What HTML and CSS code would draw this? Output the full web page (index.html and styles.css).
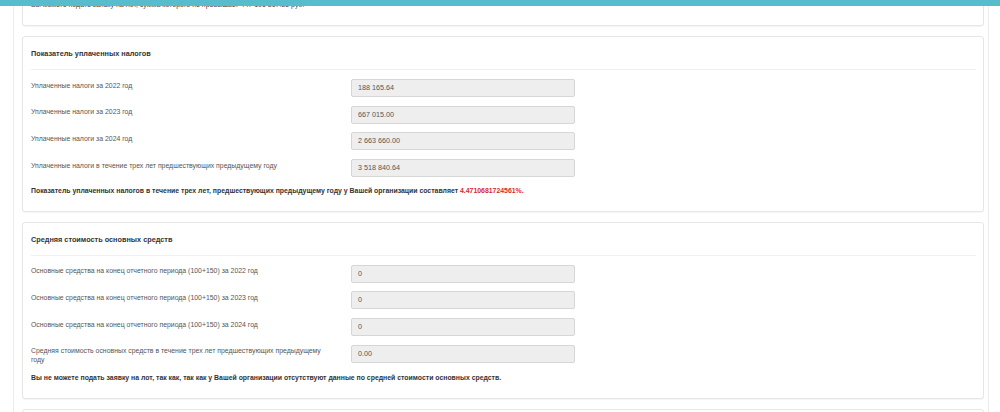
FILE: index.html
```html
<!DOCTYPE html>
<html lang="ru">
<head>
<meta charset="utf-8">
<title>Показатели</title>
<link rel="stylesheet" href="styles.css">
</head>
<body>
<div class="topbar"></div>
<div class="page">
  <div class="card card-cut">
    <p class="note">Вы можете подать заявку на лот, сумма которого не превышает 447 106 817.25 руб.</p>
  </div>

  <div class="card">
    <div class="card-head">Показатель уплаченных налогов</div>
    <div class="card-body">
      <div class="row"><label>Уплаченные налоги за 2022 год</label><div class="field">188 165.64</div></div>
      <div class="row"><label>Уплаченные налоги за 2023 год</label><div class="field">667 015.00</div></div>
      <div class="row"><label>Уплаченные налоги за 2024 год</label><div class="field">2 663 660.00</div></div>
      <div class="row"><label>Уплаченные налоги в течение трех лет предшествующих предыдущему году</label><div class="field">3 518 840.64</div></div>
      <p class="result">Показатель уплаченных налогов в течение трех лет, предшествующих предыдущему году у Вашей организации составляет <span class="red">4.4710681724561%.</span></p>
    </div>
  </div>

  <div class="card">
    <div class="card-head">Средняя стоимость основных средств</div>
    <div class="card-body">
      <div class="row"><label>Основные средства на конец отчетного периода (100+150) за 2022 год</label><div class="field">0</div></div>
      <div class="row"><label>Основные средства на конец отчетного периода (100+150) за 2023 год</label><div class="field">0</div></div>
      <div class="row"><label>Основные средства на конец отчетного периода (100+150) за 2024 год</label><div class="field">0</div></div>
      <div class="row"><label>Средняя стоимость основных средств в течение трех лет предшествующих предыдущему году</label><div class="field">0.00</div></div>
      <p class="result">Вы не можете подать заявку на лот, так как, так как у Вашей организации отсутствуют данные по средней стоимости основных средств.</p>
    </div>
  </div>

  <div class="card card-next"></div>
</div>
</body>
</html>
```

FILE: styles.css
```css
html, body {
  margin: 0;
  padding: 0;
  background: #fff;
  overflow: hidden;
}
body {
  font-family: "Liberation Sans", Arial, sans-serif;
  color: #333;
  font-size: 7px;
  line-height: 9px;
}
.topbar {
  position: fixed;
  top: 0;
  left: 0;
  right: 0;
  height: 6px;
  background: #57bdcd;
  z-index: 10;
}
.page {
  margin: 0 0 0 13px;
  width: 976px;
  border-left: 1px solid #ececec;
  border-right: 1px solid #ececec;
  padding: 0 7px 0 8px;
  box-sizing: border-box;
  height: 412px;
  overflow: hidden;
}
.card {
  background: #fff;
  border: 1px solid #e6e6e6;
  border-radius: 3px;
  box-shadow: 0 1px 1px rgba(0,0,0,0.04);
  margin-bottom: 10px;
  width: 962px;
  box-sizing: border-box;
}
.card-cut {
  margin-top: -19px;
  padding: 18px 8px 16px;
}
.note {
  margin: 0;
  color: #444;
  font-size: 7px;
  line-height: 9px;
}
.card-head {
  margin: 0 7px 0 8px;
  padding: 12px 0 10px;
  border-bottom: 1px solid #f0f0f0;
  font-weight: bold;
  font-size: 7.3px;
  line-height: 10px;
  color: #333;
}
.card-body {
  padding: 9px 8px 16px;
}
.row {
  display: grid;
  grid-template-columns: 300px 224px;
  column-gap: 20px;
  align-items: start;
  margin-bottom: 8.7px;
}
.row label {
  color: #555;
  font-size: 6.9px;
  line-height: 9px;
  padding-top: 1.5px;
}
.field {
  height: 18px;
  box-sizing: border-box;
  background: #eee;
  border: 1px solid #d6d6d6;
  border-radius: 2px;
  padding: 0 6px;
  font-size: 7.2px;
  line-height: 16px;
  color: #555;
}
.result {
  margin: 0;
  font-weight: bold;
  font-size: 6.9px;
  line-height: 9px;
  color: #333;
}
.red {
  color: #d6262e;
}
.card-next {
  height: 20px;
}
```
